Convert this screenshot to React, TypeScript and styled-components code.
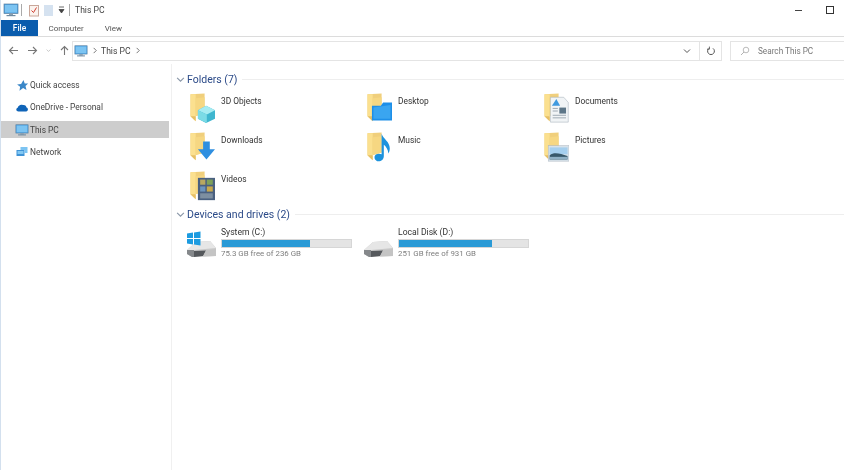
import React, { FC, ReactNode } from 'react'
import styled, { createGlobalStyle } from 'styled-components'

const GlobalStyle = createGlobalStyle`
  html, body {
    margin: 0;
    padding: 0;
    background: white;
  }
  body {
    font-family: Roboto, 'Noto Sans', sans-serif;
    font-size: 8.6px;
    color: #333;
    overflow: hidden;
  }
`

const FolderBack: FC = () => (
  <>
    <path d='M2 1.5 L21 0.5 L21 24 L7 27 L2 27 Z' fill='#f0cf7c' />
    <path d='M2 1.5 L9 1.5 L9 33 L2 27 Z' fill='#fbe08f' />
    <path d='M9 6 L21 5 L21 24 L9 27 Z' fill='#f6d782' />
    <path d='M2 27 L9 33 L9 27 Z' fill='#e6bf66' />
  </>
)

const Monitor: FC<{ size: number }> = ({ size }) => (
  <svg width={size} height={size} viewBox='0 0 16 16'>
    <rect x='1' y='2' width='14' height='9.5' fill='#4fa3e3' stroke='#5b7f9e' strokeWidth='.7' />
    <rect x='2' y='3' width='12' height='7.5' fill='#7cc4f2' />
    <rect x='6' y='11.5' width='4' height='1.8' fill='#8aa0b2' />
    <rect x='3.5' y='13' width='9' height='1.2' fill='#6f8aa0' />
  </svg>
)

const folderArt: Record<string, ReactNode> = {
  '3D Objects': (
    <>
      <path d='M12 20 L23 15 L35 20 L35 30 L23 35 L12 30 Z' fill='#3fb6cf' />
      <path d='M12 20 L23 15 L35 20 L24 25 Z' fill='#a6ecf2' />
      <path d='M12 20 L24 25 L24 35 L12 30 Z' fill='#7bdbe6' />
    </>
  ),
  Downloads: (
    <path d='M19 11 L28 11 L28 20 L35 20 L23.5 32 L12 20 L19 20 Z' fill='#2f8fe0' />
  ),
  Videos: (
    <>
      <rect x='12' y='8' width='23' height='26' fill='#4a6080' />
      <rect x='15' y='10' width='7' height='6' fill='#b9a860' />
      <rect x='24' y='10' width='8' height='6' fill='#7ea15a' />
      <rect x='15' y='18' width='7' height='6' fill='#6c94bd' />
      <rect x='24' y='18' width='8' height='6' fill='#c9a94c' />
      <rect x='15' y='26' width='17' height='6' fill='#7d8fa1' />
    </>
  ),
  Desktop: (
    <>
      <path d='M8 15 L20 15 L23 11 L35 11 L35 32 L8 32 Z' fill='#1e8fe8' />
      <path d='M10 17 L33 14 L33 30 L10 30 Z' fill='#3aa5f0' />
    </>
  ),
  Music: (
    <path
      d='M21 2 C23 8 32 11 32 19 C32 22 31 24 30 25 C30 21 27 17 24 15 L24 28 C24 33 19 35 15 34 C10 32 11 27 14 26 C16 25 19 25 21 26 Z'
      fill='#1d93dd'
    />
  ),
  Documents: (
    <>
      <path d='M10 5 L28 5 L34 11 L34 34 L10 34 Z' fill='#f1f4f6' stroke='#a9b4bd' strokeWidth='.7' />
      <path d='M12 15 L18 7 L23 15 Z' fill='#3f9adf' />
      <rect x='22' y='17' width='9' height='7' fill='#5d7688' />
      <path d='M13 18 H20 M13 21 H20 M13 26 H31 M13 29 H31' stroke='#8b98a3' strokeWidth='1' />
    </>
  ),
  Pictures: (
    <>
      <rect x='7' y='16' width='28' height='18' fill='#d8e2ea' stroke='#a9b4bd' strokeWidth='.6' />
      <rect x='9' y='18' width='24' height='8' fill='#a5cfee' />
      <path d='M9 27 C15 23 23 25 33 28 L33 32 L9 32 Z' fill='#37586a' />
      <rect x='9' y='29' width='24' height='3' fill='#8fb0c4' />
    </>
  ),
}

const FolderIcon: FC<{ name: string }> = ({ name }) => (
  <svg width={26} height={30} viewBox='0 0 35 35' preserveAspectRatio='none'>
    <FolderBack />
    {folderArt[name]}
  </svg>
)

const DriveIcon: FC<{ system?: boolean }> = ({ system }) => (
  <svg width={31} height={28} viewBox='0 0 31 28'>
    <path d='M1 20 L10 12 L24 11 L30 18 L30 26 L6 27 L1 24 Z' fill='#c9c9c9' />
    <path d='M1 20 L10 12 L24 11 L30 18 L8 20 Z' fill='#e6e6e6' />
    <path d='M1 20 L8 20 L8 27 L6 27 L1 24 Z' fill='#85888b' />
    <path d='M8 21 L20 20.5 L17 26 L8 27 Z' fill='#55585c' />
    <path d='M20 20.5 L30 19 L30 26 L17 26.5 Z' fill='#c4c4c4' />
    {system && (
      <g fill='#1c9be0'>
        <path d='M1 3.5 L7 2.5 L7 8 L1 8 Z' />
        <path d='M8 2.4 L14.5 1.4 L14.5 8 L8 8 Z' />
        <path d='M1 9 L7 9 L7 14.5 L1 13.5 Z' />
        <path d='M8 9 L14.5 9 L14.5 15.6 L8 14.6 Z' />
      </g>
    )}
  </svg>
)

const NavIcon: FC<{ kind: string }> = ({ kind }) => {
  if (kind === 'This PC') return <Monitor size={14} />
  return (
    <svg width={14} height={13} viewBox='0 0 13 13'>
      {kind === 'Quick access' && (
        <path d='M8 1 L9.2 4.4 L12.6 4.6 L10 7 L11 11 L7.6 9 L4 11.8 L4.6 7.8 L1.6 5.6 L5.6 5 Z' fill='#3a87c8' />
      )}
      {kind === 'OneDrive - Personal' && (
        <path d='M3 10.5 C0.5 10.5 0 7.5 2.2 6.8 C2.8 4.5 5 3 7.4 4 C9.5 3.6 11 5 11 6.6 C13 7 13 10.5 10.6 10.5 Z' fill='#0f64b8' />
      )}
      {kind === 'Network' && (
        <>
          <path d='M1 5 L9 5 L9 11 L1 11 Z' fill='#3f93d6' />
          <path d='M5 2 L12 2 L12 8 L9 8 L9 5 L5 5 Z' fill='#7cc4f2' />
          <rect x='2' y='6' width='6' height='3' fill='#82c8f3' />
        </>
      )}
    </svg>
  )
}

const Chevron: FC<{ dir?: 'right' | 'down'; color?: string; size?: number }> = ({
  dir = 'right',
  color = '#666',
  size = 7,
}) => (
  <svg width={size} height={size} viewBox='0 0 8 8'>
    <path
      d={dir === 'right' ? 'M3 1 L6 4 L3 7' : 'M1 2.5 L4 5.5 L7 2.5'}
      fill='none'
      stroke={color}
      strokeWidth='1'
    />
  </svg>
)

const Arrow: FC<{ dir: 'left' | 'right' | 'up'; color: string }> = ({ dir, color }) => {
  const d = {
    left: 'M10 5.5 H1.5 M5 2 L1.5 5.5 L5 9',
    right: 'M1 5.5 H9.5 M6 2 L9.5 5.5 L6 9',
    up: 'M5.5 10 V1.5 M2 5 L5.5 1.5 L9 5',
  }[dir]
  return (
    <svg width={11} height={11} viewBox='0 0 11 11'>
      <path d={d} fill='none' stroke={color} strokeWidth='1.1' />
    </svg>
  )
}

const folders = ['3D Objects', 'Desktop', 'Documents', 'Downloads', 'Music', 'Pictures', 'Videos']

const drives = [
  { name: 'System (C:)', free: '75.3 GB free of 236 GB', used: 68, system: true },
  { name: 'Local Disk (D:)', free: '251 GB free of 931 GB', used: 72, system: false },
]

const navItems = [
  { name: 'Quick access' },
  { name: 'OneDrive - Personal' },
  { name: 'This PC', selected: true },
  { name: 'Network' },
]

const App: FC = () => (
  <Window>
    <GlobalStyle />
    <TitleBar>
      <QuickTools>
        <Monitor size={16} />
        <TitleDivider $left={2} $right={6} />
        <svg width={12} height={13} viewBox='0 0 12 13'>
          <rect x='1.5' y='1.5' width='9' height='10.5' fill='#fbf3ee' stroke='#c9a79a' />
          <path d='M3.5 6.5 L5.5 8.5 L8.5 3.5' fill='none' stroke='#d23f32' strokeWidth='1' />
        </svg>
        <PageGlyph />
        <svg width={7} height={8} viewBox='0 0 7 8'>
          <path d='M1 1 H6 M1 3.5 H6 L3.5 7 Z' stroke='#444' strokeWidth='.8' fill='#444' />
        </svg>
        <TitleDivider $left={4} $right={5} />
      </QuickTools>
      <TitleText>This PC</TitleText>
      <WindowButtons>
        <MinimizeButton />
        <MaximizeButton />
      </WindowButtons>
    </TitleBar>

    <TabBar>
      <FileTab>File</FileTab>
      <Tab>Computer</Tab>
      <Tab>View</Tab>
    </TabBar>

    <AddressRow>
      <NavButtons>
        <Arrow dir='left' color='#777' />
        <Arrow dir='right' color='#777' />
        <Chevron dir='down' color='#aaa' size={5} />
        <Arrow dir='up' color='#777' />
      </NavButtons>
      <AddressBox>
        <Monitor size={14} />
        <Chevron />
        <Crumb>This PC</Crumb>
        <Chevron />
        <AddressSpacer />
        <Chevron dir='down' color='#555' size={8} />
        <RefreshBox>
          <svg width={10} height={10} viewBox='0 0 10 10'>
            <path d='M3 2.4 A3.4 3.4 0 1 0 7 2.4' fill='none' stroke='#555' strokeWidth='1' />
            <path d='M3.4 .6 V3.2 H1' fill='none' stroke='#555' strokeWidth='.9' />
          </svg>
        </RefreshBox>
      </AddressBox>
      <SearchBox>
        <svg width={10} height={10} viewBox='0 0 10 10'>
          <circle cx='6' cy='4' r='2.8' fill='none' stroke='#aaa' strokeWidth='.8' />
          <path d='M4 6 L1 9' stroke='#aaa' strokeWidth='.9' />
        </svg>
        Search This PC
      </SearchBox>
    </AddressRow>

    <Body>
      <NavPane>
        {navItems.map(item => (
          <NavRow key={item.name} $selected={item.selected}>
            <NavIcon kind={item.name} />
            {item.name}
          </NavRow>
        ))}
      </NavPane>

      <Content>
        <GroupHeader>
          <Chevron dir='down' color='#8a97a8' size={9} />
          <GroupTitle>Folders (7)</GroupTitle>
          <GroupLine />
        </GroupHeader>
        <FolderGrid>
          {folders.map(name => (
            <FolderItem key={name}>
              <FolderIcon name={name} />
              <span>{name}</span>
            </FolderItem>
          ))}
        </FolderGrid>

        <GroupHeader>
          <Chevron dir='down' color='#8a97a8' size={9} />
          <GroupTitle>Devices and drives (2)</GroupTitle>
          <GroupLine />
        </GroupHeader>
        <DriveGrid>
          {drives.map(drive => (
            <DriveItem key={drive.name}>
              <DriveIcon system={drive.system} />
              <DriveInfo>
                <span>{drive.name}</span>
                <UsageBar>
                  <UsageFill style={{ width: `${drive.used}%` }} />
                </UsageBar>
                <FreeText>{drive.free}</FreeText>
              </DriveInfo>
            </DriveItem>
          ))}
        </DriveGrid>
      </Content>
    </Body>
  </Window>
)

export default App

const Window = styled.div`
  display: flex;
  flex-direction: column;
  width: 844px;
  height: 470px;
  overflow: hidden;
  box-sizing: border-box;
  border-left: 1px solid #d3e0ee;
  background: white;
  filter: blur(0.45px);
`

const TitleBar = styled.div`
  display: flex;
  align-items: center;
  height: 20px;
  padding-left: 2px;
`

const QuickTools = styled.div`
  display: flex;
  align-items: center;
`

const TitleDivider = styled.div<{ $left: number; $right: number }>`
  width: 1px;
  height: 12px;
  margin: 0 ${p => p.$right}px 0 ${p => p.$left}px;
  background: #aaa;
`

const PageGlyph = styled.div`
  width: 9px;
  height: 11px;
  margin: 0 5px 0 4px;
  background: #d5e2f0;
`

const TitleText = styled.div`
  flex: 1;
  color: #444;
  font-size: 8.6px;
`

const WindowButtons = styled.div`
  display: flex;
  align-items: center;
  gap: 24px;
  padding-right: 10px;
`

const MinimizeButton = styled.div`
  width: 7px;
  height: 1px;
  background: #444;
`

const MaximizeButton = styled.div`
  width: 6px;
  height: 6px;
  border: 1px solid #333;
`

const TabBar = styled.div`
  display: flex;
  align-items: stretch;
  height: 17px;
  box-sizing: border-box;
  border-bottom: 1px solid #dcdcdc;
`

const Tab = styled.div`
  display: flex;
  align-items: center;
  padding: 0 10.5px;
  color: #555;
  font-size: 8px;
`

const FileTab = styled(Tab)`
  width: 37px;
  justify-content: center;
  padding: 0;
  background: #0a5cad;
  color: white;
  font-size: 8.4px;
  font-weight: 500;
`

const AddressRow = styled.div`
  display: flex;
  align-items: center;
  height: 27px;
`

const NavButtons = styled.div`
  display: flex;
  align-items: center;
  gap: 8px;
  width: 71px;
  box-sizing: border-box;
  padding-left: 7px;
`

const AddressBox = styled.div`
  display: flex;
  align-items: center;
  gap: 3px;
  width: 650px;
  height: 20px;
  box-sizing: border-box;
  padding-left: 1px;
  border: 1px solid #e4e4e4;
`

const Crumb = styled.span`
  color: #444;
`

const AddressSpacer = styled.div`
  flex: 1;
`

const RefreshBox = styled.div`
  display: flex;
  align-items: center;
  justify-content: center;
  width: 21px;
  height: 100%;
  margin-left: 5px;
  border-left: 1px solid #e4e4e4;
`

const SearchBox = styled.div`
  display: flex;
  align-items: center;
  gap: 8px;
  flex: 1;
  height: 20px;
  box-sizing: border-box;
  margin-left: 8px;
  padding-left: 9px;
  border: 1px solid #e4e4e4;
  border-right: none;
  color: #777;
  font-size: 8.2px;
`

const Body = styled.div`
  display: flex;
  flex: 1;
  min-height: 0;
`

const NavPane = styled.div`
  display: flex;
  flex-direction: column;
  gap: 5.3px;
  width: 171px;
  box-sizing: border-box;
  padding: 12.5px 2px 0 0;
  border-right: 1px solid #f0f0f0;
  font-size: 8.4px;
`

const NavRow = styled.div<{ $selected?: boolean }>`
  display: flex;
  align-items: center;
  gap: 1px;
  height: 17px;
  padding-left: 14px;
  color: #444;
  background: ${p => (p.$selected ? '#cdcdcd' : 'transparent')};
`

const Content = styled.div`
  flex: 1;
  padding: 8px 0 0 4px;
`

const GroupHeader = styled.div`
  display: flex;
  align-items: center;
  gap: 2px;
  height: 14px;
`

const GroupTitle = styled.span`
  color: #2b4a88;
  font-size: 10.5px;
`

const GroupLine = styled.div`
  flex: 1;
  height: 1px;
  margin-left: 3px;
  background: #eeeeee;
`

const FolderGrid = styled.div`
  display: grid;
  grid-template-columns: repeat(3, 177px);
  grid-auto-rows: 36px;
  row-gap: 3px;
  padding: 7px 0 0 13px;
  font-size: 8.4px;
`

const FolderItem = styled.div`
  display: flex;
  align-items: flex-start;
  gap: 6px;
  color: #333;

  span {
    margin-top: 3px;
  }
`

const DriveGrid = styled.div`
  display: grid;
  grid-template-columns: repeat(2, 177px);
  padding: 6px 0 0 10px;
`

const DriveItem = styled.div`
  display: flex;
  align-items: flex-end;
  gap: 4px;
`

const DriveInfo = styled.div`
  display: flex;
  flex-direction: column;
  width: 131px;
  color: #333;
`

const UsageBar = styled.div`
  height: 9px;
  box-sizing: border-box;
  margin: 2px 0 1px;
  background: #e4e4e4;
  border: 1px solid #d6d6d6;
`

const UsageFill = styled.div`
  height: 100%;
  background: #2a9ad6;
`

const FreeText = styled.span`
  color: #7d7d7d;
  font-size: 7.9px;
`
